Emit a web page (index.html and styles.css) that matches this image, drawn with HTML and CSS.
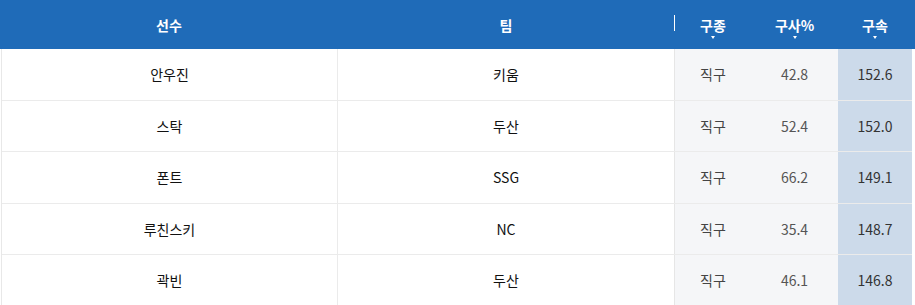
FILE: index.html
```html
<!DOCTYPE html>
<html lang="ko">
<head>
<meta charset="utf-8">
<link rel="stylesheet" href="styles.css">
</head>
<body>
<div class="table">
  <div class="thead">
    <div class="th">선수</div>
    <div class="th">팀</div>
    <div class="th sort sep"><span>구종</span><i class="tri"></i></div>
    <div class="th sort"><span>구사%</span><i class="tri"></i></div>
    <div class="th sort"><span>구속</span><i class="tri"></i></div>
    <div class="th"></div>
  </div>
  <div class="tbody">
    <div class="tr"><div class="td name">안우진</div><div class="td team">키움</div><div class="td type">직구</div><div class="td pct">42.8</div><div class="td speed">152.6</div></div>
    <div class="tr"><div class="td name">스탁</div><div class="td team">두산</div><div class="td type">직구</div><div class="td pct">52.4</div><div class="td speed">152.0</div></div>
    <div class="tr"><div class="td name">폰트</div><div class="td team">SSG</div><div class="td type">직구</div><div class="td pct">66.2</div><div class="td speed">149.1</div></div>
    <div class="tr"><div class="td name">루친스키</div><div class="td team">NC</div><div class="td type">직구</div><div class="td pct">35.4</div><div class="td speed">148.7</div></div>
    <div class="tr"><div class="td name">곽빈</div><div class="td team">두산</div><div class="td type">직구</div><div class="td pct">46.1</div><div class="td speed">146.8</div></div>
  </div>
</div>
</body>
</html>
```
FILE: styles.css
```css
* { box-sizing: border-box; margin: 0; padding: 0; }
html, body { background: #fff; }
body {
  width: 915px;
  height: 305px;
  overflow: hidden;
  font-family: "Noto Sans CJK KR", "Noto Sans", sans-serif;
  font-size: 14px;
}
.thead {
  display: grid;
  grid-template-columns: 338px 336px 77px 87px 74px 3px;
  height: 49px;
  background: #1f6bb8;
  color: #fff;
  font-weight: 700;
}
.th {
  display: flex;
  align-items: center;
  justify-content: center;
  line-height: 1;
}
.th.sort {
  position: relative;
  flex-direction: column;
}
.th.sort .tri {
  position: absolute;
  left: 50%;
  top: 36px;
  margin-left: -2px;
  width: 0;
  height: 0;
  border-left: 2.5px solid transparent;
  border-right: 2.5px solid transparent;
  border-top: 3px solid #fff;
}
.th.sep { position: relative; }
.th.sep::before {
  content: "";
  position: absolute;
  left: 0;
  top: 15px;
  width: 1px;
  height: 16px;
  background: #fff;
}
.th.sep span, .th.sep .tri { }
.th.sep span { padding-left: 1px; }
.tbody {
  margin-left: 1px;
  width: 911px;
  border-left: 1px solid #e8e8e8;
}
.tr {
  display: grid;
  grid-template-columns: 336px 336px 77px 87px 74px;
  height: 51.5px;
  border-bottom: 1px solid #ebebeb;
}
.td {
  display: flex;
  align-items: center;
  justify-content: center;
  color: #111;
}
.name { border-right: 1px solid #ebebeb; }
.type {
  background: #f5f6f8;
  border-left: 1px solid #e6e6e6;
  color: #444;
}
.pct {
  background: #f5f6f8;
  color: #555;
}
.speed {
  background: #ccdaea;
  color: #333;
}
```
